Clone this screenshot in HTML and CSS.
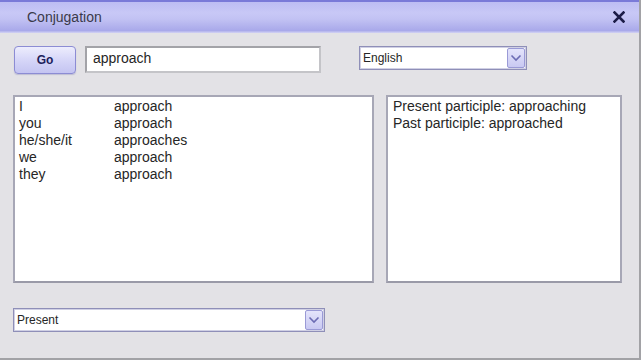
FILE: index.html
```html
<!DOCTYPE html>
<html lang="en">
<head>
    <meta charset="UTF-8" />
    <title>Conjugation</title>
    <link rel="stylesheet" href="styles.css">
</head>
<body>
    <div class="window">
        <header class="titlebar">
            <span class="title">Conjugation</span>
            <span class="close">
                <svg width="12" height="12" viewBox="0 0 12 12"><path d="M1.5 1.5 L10.5 10.5 M10.5 1.5 L1.5 10.5" stroke="#1c1c48" stroke-width="2.6" stroke-linecap="square"/></svg>
            </span>
        </header>

        <div class="content">
            <div class="toolbar">
                <button class="go-btn">Go</button>
                <div class="text-field">approach</div>
                <div class="combo combo-lang">
                    <span class="combo-value">English</span>
                    <span class="combo-arrow">
                        <svg width="12" height="8" viewBox="0 0 12 8"><polyline points="1.5,1.5 6,6 10.5,1.5" fill="none" stroke="#6c6cb4" stroke-width="1.6"/></svg>
                    </span>
                </div>
            </div>

            <div class="panels">
                <div class="panel panel-forms">
                    <div class="forms">
                        <span>I</span><span>approach</span>
                        <span>you</span><span>approach</span>
                        <span>he/she/it</span><span>approaches</span>
                        <span>we</span><span>approach</span>
                        <span>they</span><span>approach</span>
                    </div>
                </div>
                <div class="panel panel-info">
                    <div>Present participle: approaching</div>
                    <div>Past participle: approached</div>
                </div>
            </div>

            <div class="combo combo-tense">
                <span class="combo-value">Present</span>
                <span class="combo-arrow">
                    <svg width="12" height="8" viewBox="0 0 12 8"><polyline points="1.5,1.5 6,6 10.5,1.5" fill="none" stroke="#6c6cb4" stroke-width="1.6"/></svg>
                </span>
            </div>
        </div>
    </div>
</body>
</html>
```

FILE: styles.css
```css
/* Reset */
* {
    box-sizing: border-box;
    margin: 0;
    padding: 0;
}
body {
    font-family: 'Liberation Sans', Arial, sans-serif;
    background: #e3e2e6;
    color: #262626;
}
.window {
    width: 641px;
    height: 360px;
    display: flex;
    flex-direction: column;
    background: #e3e2e6;
    border-right: 2px solid #a2a2a6;
    border-bottom: 2px solid #a2a2a6;
}
.titlebar {
    height: 33px;
    display: flex;
    align-items: center;
    justify-content: space-between;
    padding: 0 14px 2px 27px;
    border-top: 2px solid #7a7ad8;
    background: linear-gradient(#bdbdf3, #c8c8f6 35%, #c2c2f3 55%, #a9a9ea 92%, #d4d4f4);
}
.title {
    font-size: 14px;
    color: #3a3a4a;
}
.close {
    display: flex;
    align-items: center;
    margin-top: 1px;
}
.content {
    flex: 1;
    padding: 13px 0 0 13px;
}
.toolbar {
    display: flex;
    align-items: flex-start;
}
.go-btn {
    margin-left: 1px;
    width: 62px;
    height: 28px;
    border: 1px solid #8c8cd4;
    border-radius: 4px;
    background: linear-gradient(#ededfd, #d6d6f8 50%, #c4c4f1);
    font-family: 'Liberation Sans', Arial, sans-serif;
    font-size: 12px;
    font-weight: 700;
    color: #20205a;
    box-shadow: 0 1px 1px rgba(80, 80, 160, 0.25);
}
.text-field {
    margin-left: 9px;
    width: 236px;
    height: 27px;
    padding: 2px 0 0 6px;
    background: #fff;
    border: 2px solid #a3a3a8;
    border-bottom-color: #c4c4c8;
    border-right-color: #c4c4c8;
    font-size: 14px;
}
.combo {
    display: flex;
    align-items: center;
    justify-content: space-between;
    height: 24px;
    background: #fff;
    border: 1px solid #8f8fb8;
    box-shadow: inset 0 0 0 1px #d0d0e4;
    padding: 0 1px 0 3px;
    font-size: 12px;
}
.combo-lang {
    margin-left: 38px;
    width: 168px;
}
.combo-tense {
    margin-top: 25px;
    width: 312px;
}
.combo-arrow {
    width: 18px;
    height: 20px;
    display: flex;
    align-items: center;
    justify-content: center;
    border: 1px solid #9a9ad6;
    border-radius: 2px;
    background: linear-gradient(#e4e4fb, #c9c9f2);
}
.panels {
    display: flex;
    gap: 12px;
    margin-top: 21px;
}
.panel {
    height: 188px;
    background: #fff;
    border: 2px solid #a7a7b6;
    border-bottom-color: #9a9aa8;
    font-size: 14px;
    line-height: 17px;
}
.panel-forms {
    width: 361px;
    padding: 1px 0 0 4px;
}
.forms {
    display: grid;
    grid-template-columns: 95px auto;
}
.panel-info {
    width: 236px;
    padding: 1px 0 0 5px;
}
```
